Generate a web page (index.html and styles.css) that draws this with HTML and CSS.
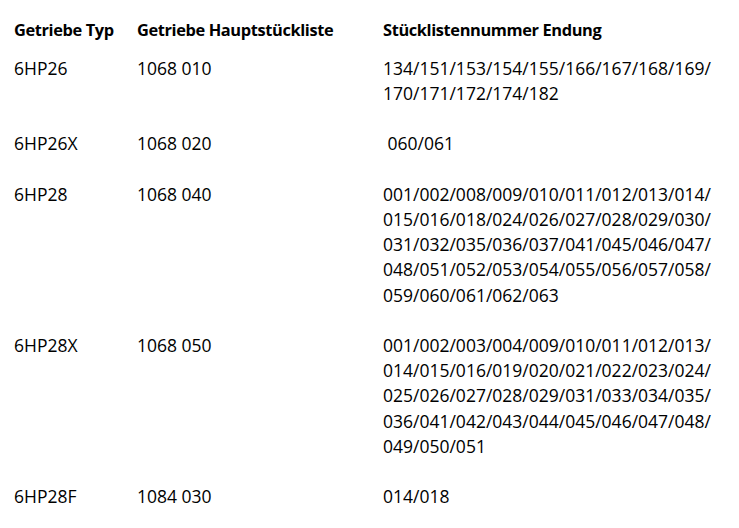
FILE: index.html
```html
<!DOCTYPE html>
<html lang="de">
<head>
<meta charset="utf-8">
<title>Getriebe Stücklisten</title>
<link rel="stylesheet" href="styles.css">
</head>
<body>
<table class="parts">
  <colgroup>
    <col class="c-typ">
    <col class="c-haupt">
    <col class="c-end">
  </colgroup>
  <thead>
    <tr>
      <th>Getriebe Typ</th>
      <th>Getriebe Hauptstückliste</th>
      <th>Stücklistennummer Endung</th>
    </tr>
  </thead>
  <tbody>
    <tr>
      <td>6HP26</td>
      <td>1068 010</td>
      <td>134/151/153/154/155/166/167/168/169/<br>170/171/172/174/182</td>
    </tr>
    <tr>
      <td>6HP26X</td>
      <td>1068 020</td>
      <td>&nbsp;060/061</td>
    </tr>
    <tr>
      <td>6HP28</td>
      <td>1068 040</td>
      <td>001/002/008/009/010/011/012/013/014/<br>015/016/018/024/026/027/028/029/030/<br>031/032/035/036/037/041/045/046/047/<br>048/051/052/053/054/055/056/057/058/<br>059/060/061/062/063</td>
    </tr>
    <tr>
      <td>6HP28X</td>
      <td>1068 050</td>
      <td>001/002/003/004/009/010/011/012/013/<br>014/015/016/019/020/021/022/023/024/<br>025/026/027/028/029/031/033/034/035/<br>036/041/042/043/044/045/046/047/048/<br>049/050/051</td>
    </tr>
    <tr>
      <td>6HP28F</td>
      <td>1084 030</td>
      <td>014/018</td>
    </tr>
  </tbody>
</table>
</body>
</html>
```
FILE: styles.css
```css
html, body {
  margin: 0;
  padding: 0;
  background: #ffffff;
}
body {
  font-family: "Open Sans", "Noto Sans", "Liberation Sans", sans-serif;
  font-size: 17.5px;
  line-height: 25.2px;
  color: #000000;
}
.parts {
  border-collapse: collapse;
  table-layout: fixed;
  margin: 16.8px 0 0 14px;
}
.c-typ { width: 123px; }
.c-haupt { width: 246px; }
.c-end { width: 356px; }
.parts th,
.parts td {
  padding: 0;
  text-align: left;
  vertical-align: top;
  white-space: nowrap;
}
.parts th {
  font-size: 16.4px;
  font-weight: 700;
  letter-spacing: -0.38px;
  padding-bottom: 13.8px;
}
.parts td {
  font-weight: 500;
  padding-bottom: 25.2px;
}
```
